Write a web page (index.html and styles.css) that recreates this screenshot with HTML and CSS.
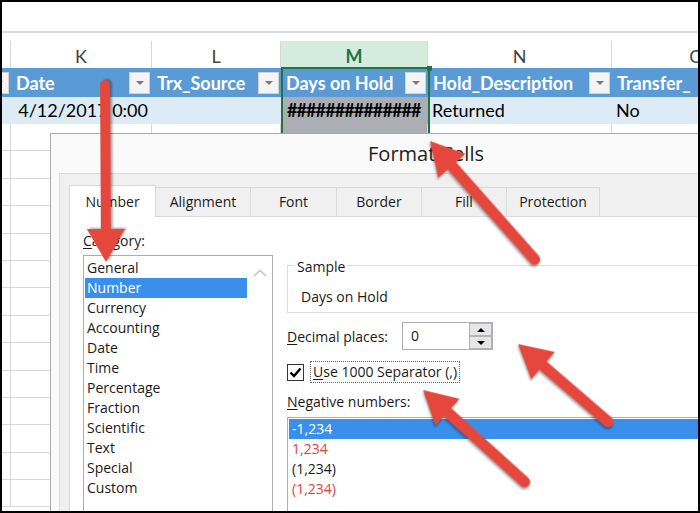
FILE: index.html
```html
<!DOCTYPE html>
<html>
<head>
<meta charset="utf-8">
<title>Format Cells</title>
<link rel="stylesheet" href="styles.css">
</head>
<body>
<div class="frame">
  <div class="topbar"></div>
  <div class="sheet">
    <div class="row colletters">
      <div class="c c0"></div>
      <div class="c">K</div>
      <div class="c">L</div>
      <div class="c sel">M</div>
      <div class="c">N</div>
      <div class="c">O</div>
    </div>
    <div class="row thead">
      <div class="c c0"><span class="dd"></span></div>
      <div class="c"><span class="t">Date</span><span class="dd"></span></div>
      <div class="c"><span class="t">Trx_Source</span><span class="dd"></span></div>
      <div class="c"><span class="t">Days on Hold</span><span class="dd"></span></div>
      <div class="c"><span class="t">Hold_Description</span><span class="dd"></span></div>
      <div class="c"><span class="t">Transfer_</span></div>
    </div>
    <div class="row tdata">
      <div class="c c0"></div>
      <div class="c num">4/12/2017 0:00</div>
      <div class="c"></div>
      <div class="c selc hash">##############</div>
      <div class="c">Returned</div>
      <div class="c">No</div>
    </div>
    <div class="row blank"><div class="c"></div><div class="c"></div><div class="c"></div><div class="c selc"></div><div class="c"></div><div class="c"></div></div>
    <div class="row blank"><div class="c"></div><div class="c"></div><div class="c"></div><div class="c selc"></div><div class="c"></div><div class="c"></div></div>
    <div class="row blank"><div class="c"></div><div class="c"></div><div class="c"></div><div class="c selc"></div><div class="c"></div><div class="c"></div></div>
    <div class="row blank"><div class="c"></div><div class="c"></div><div class="c"></div><div class="c selc"></div><div class="c"></div><div class="c"></div></div>
    <div class="row blank"><div class="c"></div><div class="c"></div><div class="c"></div><div class="c selc"></div><div class="c"></div><div class="c"></div></div>
    <div class="row blank"><div class="c"></div><div class="c"></div><div class="c"></div><div class="c selc"></div><div class="c"></div><div class="c"></div></div>
    <div class="row blank"><div class="c"></div><div class="c"></div><div class="c"></div><div class="c selc"></div><div class="c"></div><div class="c"></div></div>
    <div class="row blank"><div class="c"></div><div class="c"></div><div class="c"></div><div class="c selc"></div><div class="c"></div><div class="c"></div></div>
    <div class="row blank"><div class="c"></div><div class="c"></div><div class="c"></div><div class="c selc"></div><div class="c"></div><div class="c"></div></div>
    <div class="row blank"><div class="c"></div><div class="c"></div><div class="c"></div><div class="c selc"></div><div class="c"></div><div class="c"></div></div>
    <div class="row blank"><div class="c"></div><div class="c"></div><div class="c"></div><div class="c selc"></div><div class="c"></div><div class="c"></div></div>
    <div class="row blank"><div class="c"></div><div class="c"></div><div class="c"></div><div class="c selc"></div><div class="c"></div><div class="c"></div></div>
    <div class="row blank"><div class="c"></div><div class="c"></div><div class="c"></div><div class="c selc"></div><div class="c"></div><div class="c"></div></div>
    <div class="row blank"><div class="c"></div><div class="c"></div><div class="c"></div><div class="c selc"></div><div class="c"></div><div class="c"></div></div>
  </div>

  <div class="selection"><span class="handle"></span></div>

  <div class="dialog">
    <div class="dlg-title">Format Cells</div>
    <div class="dlg-body">
      <div class="tabs">
        <div class="tab active w-number">Number</div>
        <div class="tab w-align">Alignment</div>
        <div class="tab w-font">Font</div>
        <div class="tab w-border">Border</div>
        <div class="tab w-fill">Fill</div>
        <div class="tab w-prot">Protection</div>
      </div>
      <div class="panel">
        <div class="col-left">
          <div class="lbl cat-lbl"><u>C</u>ategory:</div>
          <div class="listbox cat">
            <div class="items">
              <div class="item">General</div>
              <div class="item selected">Number</div>
              <div class="item">Currency</div>
              <div class="item">Accounting</div>
              <div class="item">Date</div>
              <div class="item">Time</div>
              <div class="item">Percentage</div>
              <div class="item">Fraction</div>
              <div class="item">Scientific</div>
              <div class="item">Text</div>
              <div class="item">Special</div>
              <div class="item">Custom</div>
            </div>
            <div class="vscroll">
              <svg width="14" height="8" viewBox="0 0 14 8"><path d="M1 7 L7 1.5 L13 7" fill="none" stroke="#c2c2c2" stroke-width="1.6"/></svg>
            </div>
          </div>
        </div>
        <div class="col-right">
          <fieldset class="sample">
            <legend>Sample</legend>
            <div class="sample-text">Days on Hold</div>
          </fieldset>
          <div class="decimals">
            <span class="dec-lbl"><u>D</u>ecimal places:</span>
            <div class="spin">
              <span class="val">0</span>
              <div class="spinbtns">
                <span class="sbtn"><span class="tri-up"></span></span>
                <span class="sbtn"><span class="tri-down"></span></span>
              </div>
            </div>
          </div>
          <div class="checkrow">
            <span class="checkbox">
              <svg width="15" height="15" viewBox="0 0 15 15"><path d="M2.5 7.5 L6 11 L12.5 3.5" fill="none" stroke="#000" stroke-width="2.4"/></svg>
            </span>
            <span class="focus"><u>U</u>se 1000 Separator (,)</span>
          </div>
          <div class="lbl neg-lbl"><u>N</u>egative numbers:</div>
          <div class="listbox neg">
            <div class="item selected">-1,234</div>
            <div class="item red">1,234</div>
            <div class="item">(1,234)</div>
            <div class="item red">(1,234)</div>
          </div>
        </div>
      </div>
    </div>
  </div>

  <svg class="arrows" width="700" height="513" viewBox="0 0 700 513">
    <g class="arrow" transform="translate(106 262) rotate(-90.3)">
      <line x1="28" y1="0" x2="177" y2="0" stroke-width="10"/>
      <polygon points="0,0 33,-19 33,19"/>
    </g>
    <g class="arrow" transform="translate(430 141) rotate(48.5)">
      <line x1="28" y1="0" x2="158" y2="0" stroke-width="11"/>
      <polygon points="0,0 33,-18 33,18"/>
    </g>
    <g class="arrow" transform="translate(518 344) rotate(40.75)">
      <line x1="28" y1="0" x2="119" y2="0" stroke-width="11"/>
      <polygon points="0,0 33,-18 33,18"/>
    </g>
    <g class="arrow" transform="translate(423 390) rotate(42.1)">
      <line x1="28" y1="0" x2="137" y2="0" stroke-width="11"/>
      <polygon points="0,0 33,-18 33,18"/>
    </g>
  </svg>
</div>
</body>
</html>
```

FILE: styles.css
```css
* { box-sizing: border-box; }
html, body { margin: 0; padding: 0; background: #fff; }

.frame {
  position: relative;
  width: 700px;
  height: 513px;
  border: 2px solid #000;
  overflow: hidden;
  background: #fff;
  font-family: Lato, "Liberation Sans", sans-serif;
}

.topbar {
  height: 31px;
  border-bottom: 2px solid #d9d9d9;
}

/* ---------- spreadsheet ---------- */
.row {
  display: grid;
  grid-template-columns: 9px 141px 129px 147px 184px 170px;
}
.c { min-width: 0; }

.colletters { padding-top: 8px; }
.colletters .c {
  height: 27px;
  border-right: 1px solid #d6d6d6;
  text-align: center;
  font-size: 18px;
  line-height: 27px;
  padding-top: 2px;
  color: #444;
}
.colletters .sel {
  background: #d3ecdd;
  color: #217346;
  font-weight: bold;
}

.thead { height: 29px; background: #5b9bd5; }
.thead .c {
  display: flex;
  align-items: center;
  padding-left: 5px;
  color: #fff;
  font-weight: bold;
  font-size: 18px;
  white-space: nowrap;
  overflow: hidden;
}
.thead .c0 { padding-left: 0; justify-content: flex-end; }
.dd {
  flex: none;
  margin-left: auto;
  margin-right: 2px;
  width: 21px;
  height: 22px;
  background: #f4f4f4;
  border: 1px solid #d2d2d2;
  display: flex;
  align-items: center;
  justify-content: center;
}
.thead .c0 .dd { margin-left: 0; }
.dd::after {
  content: "";
  border-left: 4px solid transparent;
  border-right: 4px solid transparent;
  border-top: 4px solid #7a7a7a;
}

.tdata { height: 27px; background: #ddebf7; }
.tdata .c {
  font-size: 18px;
  line-height: 27px;
  color: #000;
  padding: 0 4px;
  white-space: nowrap;
  overflow: hidden;
}
.tdata .num { text-align: right; padding-right: 4px; }
.tdata .hash { padding-left: 6px; letter-spacing: -0.9px; font-weight: bold; }
.selc { background: #abafb4; }

.blank { height: 27.4px; }
.blank .c {
  border-right: 1px solid #d6d6d6;
  border-bottom: 1px solid #d6d6d6;
}

.selection {
  position: absolute;
  left: 279px;
  top: 65px;
  width: 149px;
  height: 90px;
  border: 2px solid #217346;
}
.handle {
  position: absolute;
  right: -4px;
  top: -3px;
  width: 5px;
  height: 5px;
  background: #217346;
}

/* ---------- dialog ---------- */
.dialog {
  position: absolute;
  z-index: 2;
  left: 48px;
  top: 131px;
  width: 752px;
  height: 420px;
  background: #fafafa;
  border: 1px solid #a9a9a9;
  font-family: "Open Sans", "Noto Sans", sans-serif;
  font-size: 14px;
  color: #1a1a1a;
}
.dlg-title {
  height: 39px;
  line-height: 40px;
  text-align: center;
  font-size: 20px;
  color: #222;
}
.dlg-body {
  margin-left: 8px;
  height: 400px;
  border: 1px solid #dadada;
  background: #f0f0f0;
  padding: 11px 0 0 9px;
}

.tabs {
  display: flex;
  align-items: flex-end;
  height: 31px;
}
.tab {
  height: 29px;
  line-height: 28px;
  text-align: center;
  border: 1px solid #d9d9d9;
  border-bottom: none;
  background: #f0f0f0;
  margin-left: -1px;
  flex: none;
}
.tab.active {
  height: 32px;
  line-height: 31px;
  margin-left: 0;
  margin-bottom: -1px;
  background: #fff;
  position: relative;
  z-index: 1;
}
.w-number { width: 87px; }
.w-align { width: 96px; }
.w-font { width: 87px; }
.w-border { width: 86px; }
.w-fill { width: 86px; }
.w-prot { width: 94px; }

.panel {
  display: flex;
  gap: 14px;
  height: 400px;
  background: #fff;
  border-top: 1px solid #d9d9d9;
  border-left: 1px solid #d9d9d9;
  padding: 14px 0 0 13px;
}
.col-left { width: 190px; flex: none; }
.col-right { width: 480px; flex: none; }

.lbl { height: 20px; line-height: 20px; }
.cat-lbl { margin-bottom: 4px; }

.listbox {
  border: 1px solid #abadb3;
  background: #fff;
  padding: 1px 0 0 1px;
}
.listbox.cat {
  display: flex;
  height: 270px;
}
.cat .items { width: 162px; flex: none; padding-top: 1px; }
.item {
  height: 20px;
  line-height: 20px;
  padding-left: 2px;
  white-space: nowrap;
}
.item.selected { background: #3a8fea; color: #fff; }
.vscroll {
  flex: 1;
  display: flex;
  justify-content: center;
  align-items: flex-start;
  padding-top: 12px;
}

.sample {
  margin: 22px 0 0 0;
  min-width: 0;
  border: 1px solid #dcdcdc;
  padding: 10px 0 5px 13px;
}
.sample legend {
  padding: 4px 2px 0 2px;
  margin-left: -6px;
  line-height: 20px;
}
.sample-text { line-height: 20px; height: 20px; }

.decimals {
  display: flex;
  align-items: center;
  height: 28px;
  margin-top: 9px;
}
.dec-lbl { width: 115px; flex: none; }
.spin {
  display: flex;
  width: 91px;
  height: 28px;
  border: 1px solid #abadb3;
  background: #fff;
}
.spin .val { flex: 1; padding-left: 8px; line-height: 26px; }
.spinbtns {
  width: 23px;
  display: flex;
  flex-direction: column;
}
.sbtn {
  height: 13px;
  border: 1px solid #b4b4b4;
  background: #e6e6e6;
  display: flex;
  align-items: center;
  justify-content: center;
}
.tri-up {
  border-left: 4px solid transparent;
  border-right: 4px solid transparent;
  border-bottom: 4px solid #000;
}
.tri-down {
  border-left: 4px solid transparent;
  border-right: 4px solid transparent;
  border-top: 4px solid #000;
}

.checkrow {
  display: flex;
  align-items: center;
  height: 22px;
  margin-top: 11px;
}
.checkbox {
  width: 17px;
  height: 17px;
  border: 1px solid #333;
  background: #fff;
  display: flex;
  align-items: center;
  justify-content: center;
}
.focus {
  margin-left: 6px;
  border: 1px dotted #666;
  padding: 0 2px;
  line-height: 20px;
}

.neg-lbl { margin-top: 9px; margin-bottom: 5px; }
.listbox.neg { height: 120px; }
.neg .item { padding-left: 3px; }
.red { color: #e6403b; }

u { text-decoration-thickness: 1px; text-underline-offset: 2px; }

/* ---------- arrows ---------- */
.arrows {
  position: absolute;
  z-index: 5;
  left: -2px;
  top: -2px;
}
.arrow {
  fill: #e5473d;
  stroke: #e5473d;
  stroke-linecap: round;
  filter: drop-shadow(1px 2px 1px rgba(0,0,0,0.35));
}
.arrow polygon { stroke: none; }
```
